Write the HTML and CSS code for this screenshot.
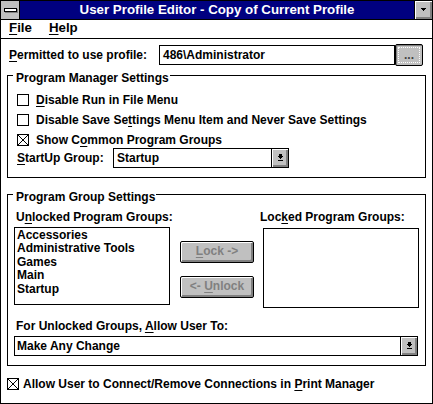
FILE: index.html
```html
<!DOCTYPE html>
<html>
<head>
<meta charset="utf-8">
<link rel="stylesheet" href="styles.css">
</head>
<body>
<div class="window">
  <div class="titlebar">
    <div class="sysmenu">
      <svg width="14" height="5" viewBox="0 0 14 5" shape-rendering="crispEdges"><rect x="1" y="4" width="13" height="1" fill="#808080"/><rect x="13" y="1" width="1" height="4" fill="#808080"/><rect x="0.5" y="0.5" width="12" height="3" fill="#fff" stroke="#000"/></svg>
    </div>
    <div class="title">User Profile Editor - Copy of Current Profile</div>
    <div class="minbtn">
      <svg width="5" height="3" viewBox="0 0 5 3" shape-rendering="crispEdges"><rect x="0" y="0" width="5" height="1"/><rect x="1" y="1" width="3" height="1"/><rect x="2" y="2" width="1" height="1"/></svg>
    </div>
  </div>
  <div class="menubar">
    <span class="menu"><u>F</u>ile</span>
    <span class="menu"><u>H</u>elp</span>
  </div>
  <div class="content">
    <div class="row-profile">
      <span class="plabel"><u>P</u>ermitted to use profile:</span>
      <div class="textbox">486\Administrator</div>
      <div class="dotbtn">...</div>
    </div>

    <fieldset class="group g1">
      <legend>Program Manager Settings</legend>
      <div class="check"><svg class="box" width="12" height="12" viewBox="0 0 12 12" shape-rendering="crispEdges"><rect x="0.5" y="0.5" width="11" height="11" fill="#fff" stroke="#000"/></svg><span><u>D</u>isable Run in File Menu</span></div>
      <div class="check"><svg class="box" width="12" height="12" viewBox="0 0 12 12" shape-rendering="crispEdges"><rect x="0.5" y="0.5" width="11" height="11" fill="#fff" stroke="#000"/></svg><span>Disable Save Se<u>t</u>tings Menu Item and Never Save Settings</span></div>
      <div class="check"><svg class="box" width="12" height="12" viewBox="0 0 12 12"><rect x="0.5" y="0.5" width="11" height="11" fill="#fff" stroke="#000" shape-rendering="crispEdges"/><path d="M1 1L11 11M11 1L1 11" stroke="#000" stroke-width="1"/></svg><span>Show C<u>o</u>mmon Program Groups</span></div>
      <div class="startup">
        <span class="slabel"><u>S</u>tartUp Group:</span>
        <div class="combo short">
          <span class="val">Startup</span>
          <span class="arrow"><svg width="5" height="7" viewBox="0 0 5 7" shape-rendering="crispEdges"><rect x="1" y="0" width="3" height="2"/><rect x="0" y="2" width="5" height="1"/><rect x="1" y="3" width="3" height="1"/><rect x="2" y="4" width="1" height="1"/><rect x="0" y="6" width="5" height="1"/></svg></span>
        </div>
      </div>
    </fieldset>

    <fieldset class="group g2">
      <legend>Program Group Settings</legend>
      <div class="lists">
        <div class="col col-left">
          <div class="llabel">U<u>n</u>locked Program Groups:</div>
          <div class="listbox lb-left">
            <div class="item">Accessories</div>
            <div class="item">Administrative Tools</div>
            <div class="item">Games</div>
            <div class="item">Main</div>
            <div class="item">Startup</div>
          </div>
        </div>
        <div class="col col-mid">
          <div class="pbtn"><u>L</u>ock -&gt;</div>
          <div class="pbtn">&lt;- <u>U</u>nlock</div>
        </div>
        <div class="col col-right">
          <div class="llabel rlabel">Loc<u>k</u>ed Program Groups:</div>
          <div class="listbox lb-right"></div>
        </div>
      </div>
      <div class="alabel">For Unlocked Groups, <u>A</u>llow User To:</div>
      <div class="combo wide">
        <span class="val">Make Any Change</span>
        <span class="arrow"><svg width="5" height="7" viewBox="0 0 5 7" shape-rendering="crispEdges"><rect x="1" y="0" width="3" height="2"/><rect x="0" y="2" width="5" height="1"/><rect x="1" y="3" width="3" height="1"/><rect x="2" y="4" width="1" height="1"/><rect x="0" y="6" width="5" height="1"/></svg></span>
      </div>
    </fieldset>

    <div class="check bottom"><svg class="box" width="12" height="12" viewBox="0 0 12 12"><rect x="0.5" y="0.5" width="11" height="11" fill="#fff" stroke="#000" shape-rendering="crispEdges"/><path d="M1 1L11 11M11 1L1 11" stroke="#000" stroke-width="1"/></svg><span>Allow User to Connect/Remove Connections in <u>P</u>rint Manager</span></div>
  </div>
</div>
</body>
</html>
```
FILE: styles.css
```css
* { box-sizing: border-box; }
html, body { margin: 0; padding: 0; }
body {
  font-family: "Liberation Sans", Arial, sans-serif;
  font-weight: bold;
  font-size: 12px;
  color: #000;
  background: #fff;
}
u {
  text-decoration-thickness: 1px;
  text-underline-offset: 2px;
}
.window {
  width: 433px;
  height: 404px;
  border: 1px solid #000;
  background: #fff;
  display: flex;
  flex-direction: column;
  overflow: hidden;
}
.titlebar {
  display: flex;
  height: 19px;
  border-bottom: 1px solid #000;
  flex: none;
}
.sysmenu {
  width: 19px;
  background: #c0c0c0;
  border-right: 1px solid #000;
  display: flex;
  align-items: center;
  justify-content: center;
  padding-left: 1px;
}
.sysmenu svg { display: block; }
.title {
  flex: 1;
  background: #000080;
  color: #fff;
  text-align: center;
  font-size: 13.3px;
  line-height: 18px;
  white-space: nowrap;
}
.minbtn {
  width: 18px;
  border-left: 1px solid #000;
  background: #c0c0c0;
  box-shadow: inset 1px 1px #fff, inset -2px -2px #808080;
  display: flex;
  align-items: center;
  justify-content: center;
  padding-bottom: 2px;
  padding-right: 1px;
}
.minbtn svg { display: block; }
.menubar {
  height: 19px;
  border-bottom: 1px solid #000;
  display: flex;
  gap: 17px;
  padding-left: 8px;
  font-size: 13.3px;
  line-height: 16px;
  flex: none;
}
.content {
  padding: 0 6px;
  display: flex;
  flex-direction: column;
}
.row-profile {
  margin-top: 5px;
  height: 22px;
  display: flex;
  align-items: center;
}
.plabel {
  flex: 0 0 150px;
  margin-left: 2px;
  line-height: 14px;
  white-space: nowrap;
}
.textbox {
  width: 236px;
  height: 20px;
  border: 1px solid #000;
  padding-left: 3px;
  line-height: 18px;
}
.dotbtn {
  width: 28px;
  height: 22px;
  border: 1px solid #000;
  border-radius: 2px;
  background: #c0c0c0;
  box-shadow: inset 1px 1px #808080;
  outline: 1px dotted #fff;
  outline-offset: -4px;
  text-align: center;
  line-height: 20px;
  color: #404040;
}
.group {
  margin: 0;
  border: 1px solid #000;
  padding: 8px 5px 9px 5px;
  min-width: 0;
}
.group legend {
  padding: 6px 1px 0 3px;
  line-height: 12px;
}
.check {
  display: flex;
  align-items: center;
  height: 16px;
  line-height: 16px;
  margin-left: 4px;
  margin-bottom: 4px;
  white-space: nowrap;
}
.check .box {
  flex: none;
  margin-right: 7px;
  display: block;
}
.g1 .check:nth-of-type(3) { margin-bottom: 0; }
.startup {
  display: flex;
  align-items: center;
  height: 20px;
  margin-left: 4px;
}
.slabel {
  flex: 0 0 96px;
  line-height: 14px;
}
.combo {
  display: flex;
  height: 20px;
  border: 1px solid #000;
  background: #fff;
}
.combo.short { width: 176px; }
.combo.wide { width: 404px; margin-left: 1px; margin-top: 3px; }
.combo .val {
  flex: 1;
  padding-left: 3px;
  line-height: 18px;
  white-space: nowrap;
}
.combo.wide .val { padding-left: 2px; }
.combo .arrow {
  flex: 0 0 17px;
  border-left: 1px solid #000;
  background: #c0c0c0;
  box-shadow: inset 1px 1px #fff, inset -2px -2px #808080;
  display: flex;
  align-items: center;
  justify-content: center;
  padding-bottom: 1px;
}
.combo .arrow svg { display: block; }
.g2 { margin-top: 7px; padding-top: 7px; }
.lists { display: flex; }
.col { display: flex; flex-direction: column; }
.col-left { margin-left: 1px; width: 156px; }
.llabel {
  line-height: 14px;
  margin-bottom: 3px;
  padding-left: 2px;
  white-space: nowrap;
}
.listbox {
  border: 1px solid #000;
  background: #fff;
  width: 156px;
}
.lb-left { height: 78px; padding-top: 1px; }
.lb-right { height: 80px; }
.item {
  line-height: 13.4px;
  padding-left: 2px;
  white-space: nowrap;
}
.col-mid {
  margin-left: 10px;
  width: 74px;
  padding-top: 31px;
  gap: 13px;
}
.pbtn {
  width: 74px;
  height: 22px;
  border: 1px solid #000;
  border-radius: 2px;
  background: #c0c0c0;
  box-shadow: inset 1px 1px #fff, inset -2px -2px #808080;
  color: #808080;
  text-align: center;
  line-height: 19px;
  white-space: nowrap;
}
.col-right { margin-left: 9px; width: 156px; }
.rlabel { margin-left: -3px; padding-left: 0; margin-bottom: 4px; }
.alabel {
  margin-top: 11px;
  padding-left: 3px;
  line-height: 14px;
}
.check.bottom {
  margin-left: 0;
  margin-top: 10px;
}
.check.bottom .box { margin-right: 4px; }
```
